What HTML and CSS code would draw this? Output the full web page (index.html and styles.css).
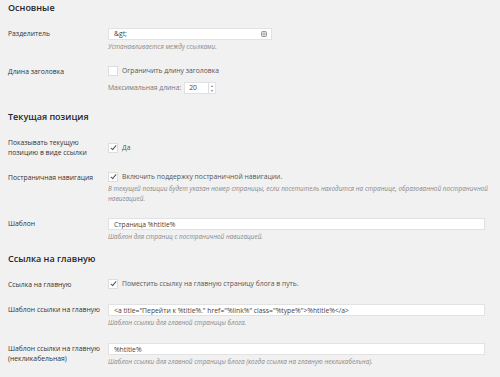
FILE: index.html
```html
<!DOCTYPE html>
<html lang="ru">

<head>
    <meta charset="UTF-8">
    <meta name="viewport" content="width=device-width, initial-scale=1.0">
    <title>Настройки навигации</title>
    <link rel="stylesheet" href="styles.css">
</head>

<body>
    <div class="wrap">
        <!-- Основные -->
        <h2>Основные</h2>

        <div class="row">
            <div class="label">Разделитель</div>
            <div class="field">
                <div class="input short">
                    <span>&amp;gt;</span>
                    <svg class="key" width="6" height="6" viewBox="0 0 6 6">
                        <rect x="0.5" y="0.5" width="5" height="5" rx="1" fill="#e4e4e4" stroke="#999"/>
                        <line x1="1.6" y1="2.2" x2="4.4" y2="2.2" stroke="#888" stroke-width="0.6"/>
                        <line x1="1.6" y1="3.8" x2="4.4" y2="3.8" stroke="#888" stroke-width="0.6"/>
                    </svg>
                </div>
                <p class="desc">Устанавливается между ссылками.</p>
            </div>
        </div>

        <div class="row">
            <div class="label">Длина заголовка</div>
            <div class="field">
                <div class="check-line"><span class="checkbox"></span>Ограничить длину заголовка</div>
                <div class="number-line">
                    Максимальная длина:
                    <span class="number">20<span class="spin"><i>&#9652;</i><i>&#9662;</i></span></span>
                </div>
            </div>
        </div>

        <!-- Текущая позиция -->
        <h2>Текущая позиция</h2>

        <div class="row">
            <div class="label">Показывать текущую<br>позицию в виде ссылки</div>
            <div class="field middle">
                <div class="check-line"><span class="checkbox checked"></span>Да</div>
            </div>
        </div>

        <div class="row">
            <div class="label">Постраничная навигация</div>
            <div class="field">
                <div class="check-line"><span class="checkbox checked"></span>Включить поддержку постраничной навигации.</div>
                <p class="desc">В текущей позиции будет указан номер страницы, если посетитель находится на странице, образованной постраничной навигацией.</p>
            </div>
        </div>

        <div class="row">
            <div class="label">Шаблон</div>
            <div class="field">
                <div class="input">Страница %htitle%</div>
                <p class="desc">Шаблон для страниц с постраничной навигацией.</p>
            </div>
        </div>

        <!-- Ссылка на главную -->
        <h2>Ссылка на главную</h2>

        <div class="row">
            <div class="label">Ссылка на главную</div>
            <div class="field">
                <div class="check-line"><span class="checkbox checked"></span>Поместить ссылку на главную страницу блога в путь.</div>
            </div>
        </div>

        <div class="row">
            <div class="label">Шаблон ссылки на главную</div>
            <div class="field">
                <div class="input">&lt;a title="Перейти к %title%." href="%link%" class="%type%"&gt;%htitle%&lt;/a&gt;</div>
                <p class="desc">Шаблон ссылки для главной страницы блога.</p>
            </div>
        </div>

        <div class="row">
            <div class="label">Шаблон ссылки на главную<br>(некликабельная)</div>
            <div class="field">
                <div class="input">%htitle%</div>
                <p class="desc">Шаблон ссылки для главной страницы блога (когда ссылка на главную некликабельна).</p>
            </div>
        </div>
    </div>
</body>

</html>
```

FILE: styles.css
```css
/* Page */
body {
    background-color: #f1f1f1;
    color: #333;
    font-family: "Open Sans", "Liberation Sans", sans-serif;
    font-size: 6.8px;
    line-height: 10px;
    margin: 0;
}

.wrap {
    padding: 0 8px 0 8px;
}

/* Section titles */
h2 {
    font-size: 9px;
    font-weight: 600;
    color: #23282d;
    line-height: 12px;
    margin: 2px 0 7px;
}

.row + h2 {
    margin-top: 4px;
}

/* One setting row */
.row {
    display: flex;
    padding: 7px 0;
}

.row:last-child {
    padding-top: 8px;
}

.label {
    width: 100px;
    flex-shrink: 0;
    padding-top: 1px;
    color: #333;
    white-space: nowrap;
}

.field {
    flex: 1;
}

.field.middle {
    display: flex;
    align-items: center;
}

/* Text inputs */
.input {
    height: 12px;
    line-height: 12px;
    background-color: #fff;
    border: 1px solid #e2e2e2;
    box-sizing: border-box;
    padding: 0 5px;
    color: #444;
    white-space: nowrap;
    overflow: hidden;
    width: 377px;
}

.input.short {
    width: 164px;
    display: flex;
    justify-content: space-between;
    align-items: center;
    padding-right: 4px;
}

.key {
    display: block;
}

.desc {
    margin: 2px 0 0;
    font-size: 6.4px;
    font-style: italic;
    color: #888;
}

/* Checkboxes */
.check-line {
    display: flex;
    align-items: center;
    color: #555;
    line-height: 10px;
}

.checkbox {
    width: 8px;
    height: 8px;
    background-color: #fff;
    border: 1px solid #ddd;
    margin-right: 4px;
    position: relative;
    flex-shrink: 0;
}

.checkbox.checked::after {
    content: "";
    position: absolute;
    left: 3px;
    top: 0;
    width: 2px;
    height: 5px;
    border: solid #555;
    border-width: 0 1px 1px 0;
    transform: rotate(40deg);
}

/* Number field */
.number-line {
    margin: 6px 0 6px;
    color: #777;
    display: flex;
    align-items: center;
}

.number {
    display: inline-flex;
    align-items: center;
    height: 12px;
    width: 32px;
    margin-left: 3px;
    background-color: #fff;
    border: 1px solid #e2e2e2;
    box-sizing: border-box;
    padding-left: 4px;
    color: #444;
    justify-content: space-between;
}

.spin {
    display: flex;
    flex-direction: column;
    width: 6px;
    height: 10px;
    border-left: 1px solid #ddd;
    font-size: 4px;
    line-height: 5px;
    color: #777;
    text-align: center;
}

.spin i {
    font-style: normal;
}
```
